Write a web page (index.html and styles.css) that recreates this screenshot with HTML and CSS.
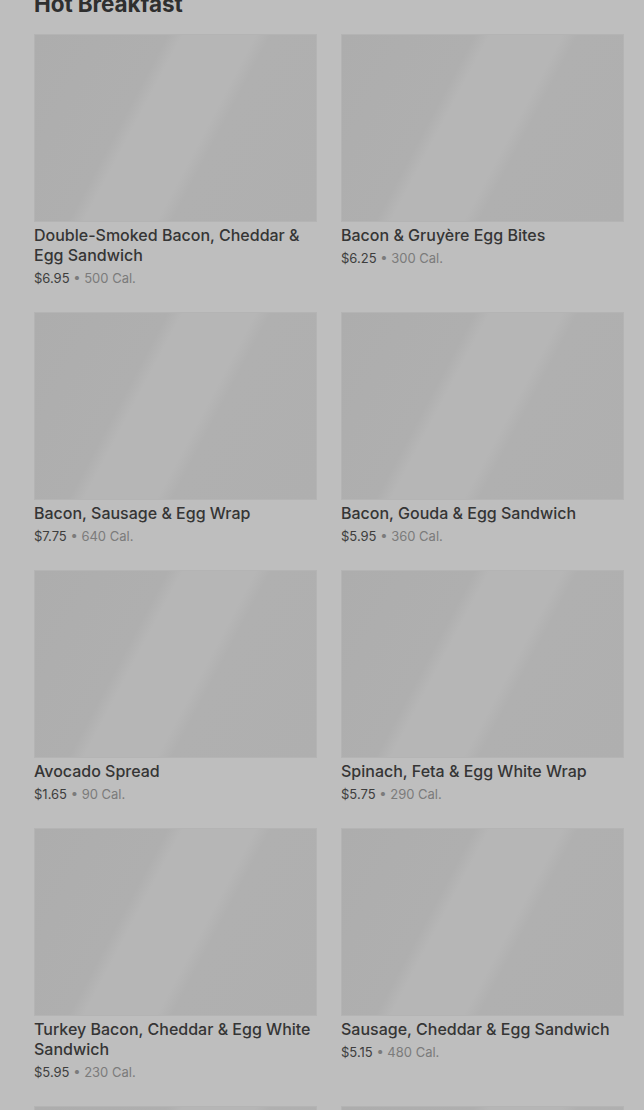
FILE: index.html
```html
<!DOCTYPE html>
<html lang="en">
<head>
   <meta charset="UTF-8">
   <meta name="viewport" content="width=device-width, initial-scale=1.0">
   <title>Hot Breakfast</title>
   <link rel="stylesheet" href="styles.css">
</head>
<body>
    <main class="menu">
        <h2 class="section-title">Hot Breakfast</h2>
        <div class="grid">
            <div class="item">
                <div class="thumb"></div>
                <h3>Double-Smoked Bacon, Cheddar &amp; Egg Sandwich</h3>
                <p class="meta"><span class="price">$6.95</span> • 500 Cal.</p>
            </div>
            <div class="item">
                <div class="thumb"></div>
                <h3>Bacon &amp; Gruyère Egg Bites</h3>
                <p class="meta"><span class="price">$6.25</span> • 300 Cal.</p>
            </div>
            <div class="item">
                <div class="thumb"></div>
                <h3>Bacon, Sausage &amp; Egg Wrap</h3>
                <p class="meta"><span class="price">$7.75</span> • 640 Cal.</p>
            </div>
            <div class="item">
                <div class="thumb"></div>
                <h3>Bacon, Gouda &amp; Egg Sandwich</h3>
                <p class="meta"><span class="price">$5.95</span> • 360 Cal.</p>
            </div>
            <div class="item">
                <div class="thumb"></div>
                <h3>Avocado Spread</h3>
                <p class="meta"><span class="price">$1.65</span> • 90 Cal.</p>
            </div>
            <div class="item">
                <div class="thumb"></div>
                <h3>Spinach, Feta &amp; Egg White Wrap</h3>
                <p class="meta"><span class="price">$5.75</span> • 290 Cal.</p>
            </div>
            <div class="item">
                <div class="thumb"></div>
                <h3>Turkey Bacon, Cheddar &amp; Egg White Sandwich</h3>
                <p class="meta"><span class="price">$5.95</span> • 230 Cal.</p>
            </div>
            <div class="item">
                <div class="thumb"></div>
                <h3>Sausage, Cheddar &amp; Egg Sandwich</h3>
                <p class="meta"><span class="price">$5.15</span> • 480 Cal.</p>
            </div>
            <div class="item">
                <div class="thumb"></div>
                <h3>Impossible™ Breakfast Sandwich</h3>
                <p class="meta"><span class="price">$6.45</span> • 420 Cal.</p>
            </div>
            <div class="item">
                <div class="thumb"></div>
                <h3>Potato, Cheddar &amp; Chive Bakes</h3>
                <p class="meta"><span class="price">$4.75</span> • 270 Cal.</p>
            </div>
        </div>
    </main>
</body>
</html>
```

FILE: styles.css
```css
* {
    margin: 0;
    padding: 0;
    box-sizing: border-box;
}

html, body {
    height: 100%;
    overflow: hidden;
}

body {
    background: #bebebe;
    font-family: Inter, 'Noto Sans', sans-serif;
    color: #333333;
}

.menu {
    padding: 0 20px 0 34px;
    /* page is scrolled a little past the section title */
    margin-top: -10px;
}

.section-title {
    font-size: 22.5px;
    line-height: 28px;
    font-weight: 700;
    color: #2f2f2f;
    letter-spacing: -0.1px;
    margin-bottom: 16px;
}

.grid {
    display: grid;
    grid-template-columns: 1fr 1fr;
    column-gap: 24px;
    row-gap: 24px;
    align-items: start;
}

.thumb {
    height: 188px;
    background: linear-gradient(118deg, #adadad 0%, #afafaf 35%, #b6b6b6 39%, #b6b6b6 58%, #b0b0b0 62%, #afafaf 100%);
    box-shadow: inset 0 0 0 1px #b4b4b4;
    margin-bottom: 3px;
}

.item h3 {
    font-size: 16px;
    line-height: 20px;
    font-weight: 500;
    color: #353535;
}

.meta {
    margin-top: 3px;
    font-size: 13px;
    line-height: 20px;
    color: #7b7b7b;
}

.price {
    color: #3d3d3d;
}
```
